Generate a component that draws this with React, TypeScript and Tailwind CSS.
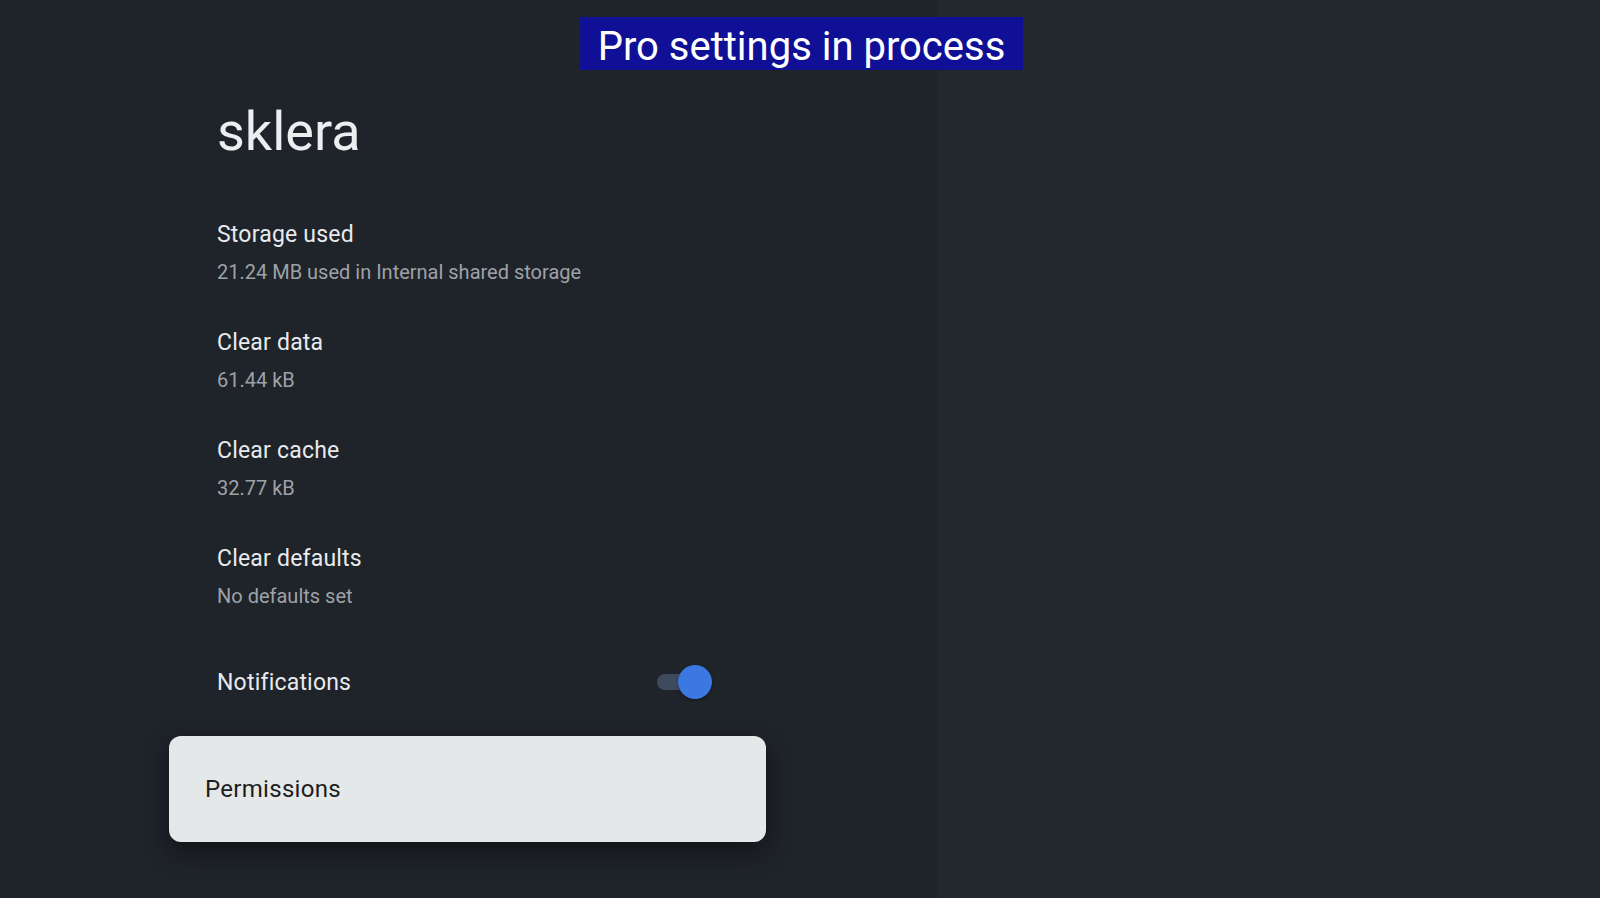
import React from "react";

interface SettingRow {
  title: string;
  subtitle: string;
}

const rows: SettingRow[] = [
  { title: "Storage used", subtitle: "21.24 MB used in Internal shared storage" },
  { title: "Clear data", subtitle: "61.44 kB" },
  { title: "Clear cache", subtitle: "32.77 kB" },
  { title: "Clear defaults", subtitle: "No defaults set" },
];

function Toggle({ on }: { on: boolean }) {
  return (
    <div className="relative w-[55px] h-[34px] mr-[6px] mb-[3px] flex items-center">
      <div className="h-[16px] w-[46px] rounded-full bg-[#3e4a5e]" />
      {on && (
        <div className="absolute right-0 top-0 w-[34px] h-[34px] rounded-full bg-[#3b78e2] shadow-[0_1px_3px_rgba(0,0,0,0.4)]" />
      )}
    </div>
  );
}

export default function App() {
  return (
    <div
      className="relative flex w-full h-[898px] overflow-hidden"
      style={{ fontFamily: "Roboto, 'Noto Sans', sans-serif" }}
    >
      {/* Settings panel */}
      <div className="w-[938px] h-full bg-[#1f232a] pl-[169px] pt-[105px]">
        <div className="w-[597px]">
          <div className="px-[48px]">
            <h1 className="text-[54px] leading-[54px] text-[#eceef0] font-normal">sklera</h1>

            <div className="mt-[62px] flex flex-col gap-[45px]">
              {rows.map(row => (
                <div key={row.title} className="flex flex-col">
                  <div className="text-[23px] leading-[28px] tracking-[0.2px] text-[#e8eaed]">{row.title}</div>
                  <div className="mt-[11px] text-[20px] leading-[24px] text-[#9ea2a8]">{row.subtitle}</div>
                </div>
              ))}
            </div>

            <div className="mt-[55px] flex items-center justify-between h-[40px]">
              <div className="text-[23px] leading-[28px] tracking-[0.2px] text-[#e8eaed]">Notifications</div>
              <Toggle on />
            </div>
          </div>

          <div className="mt-[33px] h-[106px] rounded-[12px] bg-[#e5e8e9] flex items-center px-[36px] shadow-[0_10px_24px_rgba(0,0,0,0.45)]">
            <span className="text-[24px] leading-[32px] tracking-[0.3px] text-[#1c1e21]">Permissions</span>
          </div>
        </div>
      </div>

      {/* Right side */}
      <div className="flex-1 h-full bg-[#23272e]" />

      {/* Overlay banner */}
      <div className="absolute top-[17px] left-[580px] h-[53px] w-[443px] pt-[6px] bg-[#0f1096] flex justify-center">
        <span className="text-[40px] leading-[47px] text-white">Pro settings in process</span>
      </div>
    </div>
  );
}
